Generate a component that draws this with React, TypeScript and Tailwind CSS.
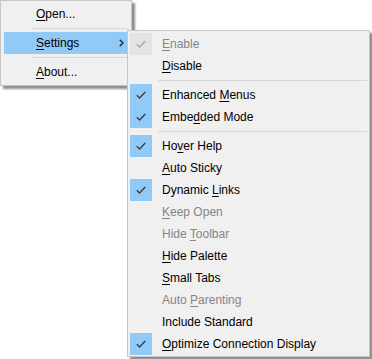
import React from 'react';

type Item =
  | { sep: true }
  | {
      sep?: false;
      label: string;
      ul?: number; // index of access-key letter
      checked?: boolean;
      disabled?: boolean;
    };

const subItems: Item[] = [
  { label: 'Enable', ul: 0, checked: true, disabled: true },
  { label: 'Disable', ul: 0 },
  { sep: true },
  { label: 'Enhanced Menus', ul: 9, checked: true },
  { label: 'Embedded Mode', ul: 4, checked: true },
  { sep: true },
  { label: 'Hover Help', ul: 2, checked: true },
  { label: 'Auto Sticky', ul: 0 },
  { label: 'Dynamic Links', ul: 8, checked: true },
  { label: 'Keep Open', ul: 0, disabled: true },
  { label: 'Hide Toolbar', ul: 5, disabled: true },
  { label: 'Hide Palette', ul: 0 },
  { label: 'Small Tabs', ul: 0 },
  { label: 'Auto Parenting', ul: 5, disabled: true },
  { label: 'Include Standard' },
  { label: 'Optimize Connection Display', ul: 0, checked: true },
];

const Label = ({ text, ul }: { text: string; ul?: number }) => {
  if (ul === undefined) return <span>{text}</span>;
  return (
    <span>
      {text.slice(0, ul)}
      <span className="underline underline-offset-2">{text[ul]}</span>
      {text.slice(ul + 1)}
    </span>
  );
};

const Check = ({ disabled }: { disabled?: boolean }) => (
  <svg width="10" height="8" viewBox="0 0 10 8" fill="none">
    <path
      d="M0.8 4.2 L3.6 7 L9.2 1"
      stroke={disabled ? '#a3a3a3' : '#3c3c3c'}
      strokeWidth="1.3"
    />
  </svg>
);

const Chevron = () => (
  <svg width="5" height="8" viewBox="0 0 5 8" fill="none">
    <path d="M0.7 0.7 L4 4 L0.7 7.3" stroke="#222" strokeWidth="1.3" />
  </svg>
);

export default function App() {
  return (
    <div
      className="relative w-[372px] h-[359px] bg-white overflow-hidden text-[12px] text-black"
      style={{ fontFamily: '"Segoe UI", "Liberation Sans", sans-serif' }}
    >
      {/* main context menu */}
      <div className="absolute left-0 top-0 w-[132px] bg-[#f0f0f0] border border-[#c6c6c6] py-[2px] px-[2px] shadow-[3px_3px_2px_rgba(0,0,0,0.45)]">
        <div className="h-[22px] flex items-center pl-[33px]">
          <Label text="Open..." ul={0} />
        </div>
        <div className="h-[7px] flex items-center pl-[29px]">
          <div className="h-px w-full bg-[#d7d7d7]" />
        </div>
        <div className="h-[22px] flex items-center pl-[33px] pr-[5px] bg-[#91c9f7] ml-px">
          <span className="flex-1 -ml-px">
            <Label text="Settings" ul={0} />
          </span>
          <Chevron />
        </div>
        <div className="h-[7px] flex items-center pl-[29px]">
          <div className="h-px w-full bg-[#d7d7d7]" />
        </div>
        <div className="h-[22px] flex items-center pl-[33px]">
          <Label text="About..." ul={0} />
        </div>
      </div>

      {/* settings submenu */}
      <div className="absolute left-[127px] top-[30px] w-[243px] bg-[#f0f0f0] border border-[#c6c6c6] pt-[2px] pb-[1px] px-[2px] shadow-[3px_3px_2px_rgba(0,0,0,0.45)]">
        {subItems.map((it, i) =>
          it.sep ? (
            <div key={i} className="h-[7px] flex items-center pl-[28px]">
              <div className="h-px w-full bg-[#d7d7d7]" />
            </div>
          ) : (
            <div key={i} className="h-[22px] flex items-center">
              <div
                className={
                  'w-[22px] h-[22px] flex items-center justify-center ' +
                  (it.checked ? (it.disabled ? 'bg-[#e3e3e3]' : 'bg-[#91c9f7]') : '')
                }
              >
                {it.checked && <Check disabled={it.disabled} />}
              </div>
              <div className={'pl-[10px] ' + (it.disabled ? 'text-[#858585]' : '')}>
                <Label text={it.label} ul={it.ul} />
              </div>
            </div>
          )
        )}
      </div>
    </div>
  );
}
